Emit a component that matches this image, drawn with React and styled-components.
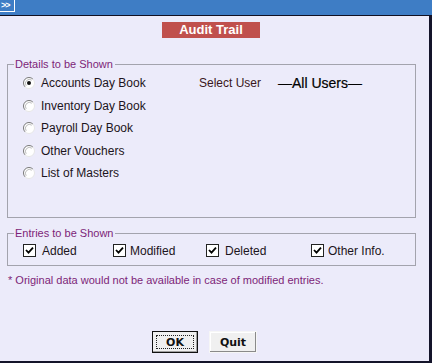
import React from 'react';
import styled, { createGlobalStyle } from 'styled-components';

const GlobalStyle = createGlobalStyle`
  html, body {
    margin: 0;
    padding: 0;
    background: #ecebfa;
  }
  body {
    font-family: "Liberation Sans", Arial, sans-serif;
  }
`;

const Window = styled.div`
  width: 432px;
  height: 363px;
  display: flex;
  flex-direction: column;
  overflow: hidden;
`;

const TitleBar = styled.div`
  height: 15px;
  flex: none;
  background: #3e7dc5;
  display: flex;
  align-items: flex-start;
`;

const ExpandButton = styled.div`
  width: 13px;
  height: 11px;
  border: 1px solid #ffffff;
  border-left: none;
  border-top: none;
  color: #ffffff;
  font-size: 9px;
  font-weight: bold;
  line-height: 11px;
  padding-left: 1px;
  letter-spacing: -1px;
`;

const Body = styled.div`
  flex: 1;
  display: flex;
  flex-direction: column;
  background: #ecebfa;
  border-top: 1px solid #111122;
  border-right: 3px solid #14142a;
  border-bottom: 2px solid #14142a;
  padding: 6px 13px 8px 7px;
`;

const Heading = styled.div`
  align-self: flex-start;
  margin-left: 155px;
  width: 98px;
  height: 16px;
  background: #c0504d;
  color: #ffffff;
  font-weight: bold;
  font-size: 13px;
  line-height: 16px;
  text-align: center;
`;

const Group = styled.fieldset`
  margin: ${p => p.$top}px 0 0 0;
  padding: 0;
  border: 1px solid #a3a3ad;
  min-width: 0;
`;

const Legend = styled.legend`
  margin-left: 6px;
  padding: 0 2px 0 1px;
  font-size: 11px;
  line-height: 13px;
  color: #7d1f78;
`;

const GroupBody = styled.div`
  padding: ${p => p.$pad};
`;

const OptionRow = styled.div`
  display: flex;
  align-items: center;
  height: 22.5px;
`;

const RadioItem = styled.label`
  display: flex;
  align-items: center;
  width: 176px;
  font-size: 12px;
  color: #1c1420;
`;

const RadioMark = styled.svg`
  width: 12px;
  height: 12px;
  margin-right: 6px;
  flex: none;
`;

const SelectLabel = styled.span`
  width: 79px;
  font-size: 12px;
  color: #3a1620;
`;

const UserValue = styled.span`
  font-size: 14px;
  color: #000000;
  -webkit-text-stroke: 0.2px #000000;
`;

const CheckGrid = styled.div`
  display: grid;
  grid-template-columns: 90px 93px 105px auto;
  height: 16px;
  align-items: center;
`;

const CheckItem = styled.label`
  display: flex;
  align-items: center;
  font-size: 12px;
  color: #1c1420;
`;

const CheckBox = styled.span`
  width: 11px;
  height: 11px;
  border: 1px solid #222222;
  background: #ffffff;
  margin-right: ${p => p.$gap}px;
  display: flex;
  align-items: center;
  justify-content: center;
  flex: none;
`;

const Note = styled.div`
  margin-top: 8px;
  padding-left: 1px;
  font-size: 11px;
  line-height: 13px;
  color: #7d1f78;
`;

const ButtonRow = styled.div`
  margin-top: auto;
  display: flex;
  gap: 11px;
  padding-left: 145px;
`;

const Button = styled.button`
  width: ${p => p.$w}px;
  height: 22px;
  padding: 0;
  font-family: "DejaVu Sans", Tahoma, sans-serif;
  font-size: 11px;
  font-weight: bold;
  color: #111111;
  background: #f0f0f0;
  border: 1px solid ${p => (p.$focus ? '#111111' : '#f6f6f6')};
  box-shadow: ${p =>
    p.$focus
      ? 'inset -1px -1px 0 #a0a0a0'
      : 'inset -1px -1px 0 #8a8a8a, inset 1px 1px 0 #ffffff'};
  position: relative;

  ${p =>
    p.$focus &&
    `&::after {
      content: '';
      position: absolute;
      inset: 3px;
      border: 1px dotted #222222;
    }`}
`;

function Radio({ checked }) {
  return (
    <RadioMark viewBox="0 0 12 12">
      <circle cx="6" cy="6" r="5.5" fill="#ffffff" />
      <path d="M9.9 2.1 A5.5 5.5 0 0 0 2.1 9.9" fill="none" stroke="#7a7a7a" strokeWidth="1" />
      <path d="M8.8 3.2 A4 4 0 0 0 3.2 8.8" fill="none" stroke="#bdbdbd" strokeWidth="1" />
      <path d="M2.1 9.9 A5.5 5.5 0 0 0 9.9 2.1" fill="none" stroke="#e6e6e6" strokeWidth="1" />
      {checked && <circle cx="6" cy="6" r="2" fill="#111111" />}
    </RadioMark>
  );
}

function Check() {
  return (
    <svg width="9" height="9" viewBox="0 0 9 9">
      <path d="M1 4 L3.5 6.6 L8 1.6" fill="none" stroke="#000000" strokeWidth="1.8" />
    </svg>
  );
}

const options = [
  'Accounts Day Book',
  'Inventory Day Book',
  'Payroll Day Book',
  'Other Vouchers',
  'List of Masters',
];

const entries = [
  { label: 'Added', gap: 6 },
  { label: 'Modified', gap: 4 },
  { label: 'Deleted', gap: 6 },
  { label: 'Other Info.', gap: 4 },
];

export default function App() {
  return (
    <Window>
      <GlobalStyle />
      <TitleBar>
        <ExpandButton>&gt;&gt;</ExpandButton>
      </TitleBar>
      <Body>
        <Heading>Audit Trail</Heading>

        <Group $top={20}>
          <Legend>Details to be Shown</Legend>
          <GroupBody $pad="1px 0 32px 15px">
            {options.map((opt, i) => (
              <OptionRow key={opt}>
                <RadioItem>
                  <Radio checked={i === 0} />
                  {opt}
                </RadioItem>
                {i === 0 && (
                  <>
                    <SelectLabel>Select User</SelectLabel>
                    <UserValue>—All Users—</UserValue>
                  </>
                )}
              </OptionRow>
            ))}
          </GroupBody>
        </Group>

        <Group $top={9}>
          <Legend>Entries to be Shown</Legend>
          <GroupBody $pad="3px 0 6px 15px">
            <CheckGrid>
              {entries.map(e => (
                <CheckItem key={e.label}>
                  <CheckBox $gap={e.gap}>
                    <Check />
                  </CheckBox>
                  {e.label}
                </CheckItem>
              ))}
            </CheckGrid>
          </GroupBody>
        </Group>

        <Note>* Original data would not be available in case of modified entries.</Note>

        <ButtonRow>
          <Button $w={46} $focus>OK</Button>
          <Button $w={48}>Quit</Button>
        </ButtonRow>
      </Body>
    </Window>
  );
}
